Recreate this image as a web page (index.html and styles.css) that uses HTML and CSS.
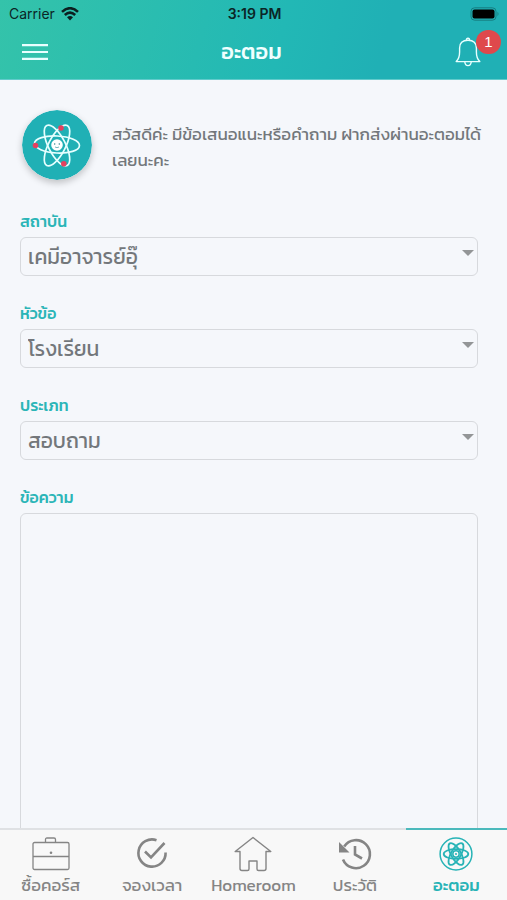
FILE: index.html
```html
<!DOCTYPE html>
<html lang="th">
<head>
<meta charset="utf-8">
<meta name="viewport" content="width=device-width, initial-scale=1">
<title>อะตอม</title>
<link rel="stylesheet" href="styles.css">
</head>
<body>
<div class="app">
  <header class="header">
    <div class="status">
      <div class="carrier">
        <span>Carrier</span>
        <svg width="18" height="14" viewBox="0 0 18 14" aria-hidden="true">
          <g fill="none" stroke="#0b1f20" stroke-width="2.6"><path d="M1 4.9Q9-2.4 17 4.9"/><path d="M3.8 8Q9 3.4 14.2 8"/></g>
          <path d="M6 10.3Q9 7.8 12 10.3L9 13.4Z" fill="#0b1f20"/>
        </svg>
      </div>
      <time class="clock">3:19 PM</time>
      <svg class="battery" width="31" height="14" viewBox="0 0 31 14" aria-hidden="true">
        <rect x="2" y=".8" width="25" height="12.4" rx="3.6" fill="none" stroke="#167d80"/>
        <rect x="3.500" y="2.6" width="22" height="8.8" rx="2" fill="#000"/>
        <path d="M28.5 4.8q2 2.2 0 4.4z" fill="#167d80"/>
      </svg>
    </div>
    <div class="titlebar">
      <button class="icon-button" type="button" aria-label="เมนู">
        <svg width="26" height="18" viewBox="0 0 26 18"><path d="M0 2.2h26M0 9h26M0 15.8h26" stroke="#e8ffff" stroke-width="2.2"/></svg>
      </button>
      <h1 class="title">อะตอม</h1>
      <button class="icon-button bell" type="button" aria-label="การแจ้งเตือน">
        <svg width="26" height="30" viewBox="0 0 26 30" fill="none" stroke="#e8ffff" stroke-width="1.4" stroke-linejoin="round">
          <path d="M1.2 24.6Q4.6 21.5 4.6 15v-4Q4.6 3.2 13 3.2T21.4 11v4q0 6.5 3.4 9.6Z"/>
          <path d="M11.4 3.2q0-2 1.6-2t1.6 2M9.800 25q.4 3.600 3.200 3.600t3.200-3.600"/>
        </svg>
        <span class="badge">1</span>
      </button>
    </div>
  </header>

  <main class="content">
    <section class="intro">
      <svg class="avatar" viewBox="0 0 70 70" aria-hidden="true">
        <circle cx="35" cy="35" r="35" fill="#20b0b5"/>
        <g fill="none" stroke="#e6ffff" stroke-width="1.700">
          <ellipse cx="35" cy="34.500" rx="22.500" ry="8.500" transform="rotate(3 35 34.500)"/>
          <ellipse cx="35" cy="35.500" rx="22.500" ry="8.500" transform="rotate(63 35 35.500)"/>
          <ellipse cx="35" cy="35.500" rx="22.500" ry="8.500" transform="rotate(117 35 35.500)"/>
        </g>
        <circle cx="35" cy="35" r="7" fill="#20b0b5"/>
        <circle cx="35" cy="35" r="5.800" fill="#fff"/>
        <path d="M33 37q2 1.400 4 0" fill="none" stroke="#59a5ac" stroke-width=".8"/>
        <circle cx="32.700" cy="34" r=".7" fill="#247b86"/><circle cx="37.300" cy="34" r=".7" fill="#247b86"/>
        <g fill="#e5405f"><circle cx="39" cy="18" r="2.800"/><circle cx="13.500" cy="35.500" r="2.800"/><circle cx="41.800" cy="53.800" r="2.800"/></g>
      </svg>
      <p class="greeting">สวัสดีค่ะ มีข้อเสนอแนะหรือคำถาม ฝากส่งผ่านอะตอมได้เลยนะคะ</p>
    </section>
    <form class="form">
      <div class="field">
        <label for="institute">สถาบัน</label>
        <div class="select-wrap"><select id="institute"><option>เคมีอาจารย์อุ๊</option></select></div>
      </div>
      <div class="field">
        <label for="topic">หัวข้อ</label>
        <div class="select-wrap"><select id="topic"><option>โรงเรียน</option></select></div>
      </div>
      <div class="field">
        <label for="kind">ประเภท</label>
        <div class="select-wrap"><select id="kind"><option>สอบถาม</option></select></div>
      </div>
      <div class="field">
        <label for="message">ข้อความ</label>
        <textarea id="message"></textarea>
      </div>
    </form>
  </main>

  <nav class="tabs">
    <a class="tab" href="#courses">
      <svg width="38" height="34" viewBox="0 0 38 34" fill="none" stroke="#858585" stroke-width="1.300">
        <rect x="1" y="5.500" width="36" height="27" rx="1.500"/><path d="M13.500 5.500v-3q0-1.500 1.500-1.500h7q1.500 0 1.500 1.500v3M1 19.500h36"/><circle cx="19" cy="15.800" r="1.300" fill="#858585" stroke="none"/>
      </svg>
      <span>ซื้อคอร์ส</span>
    </a>
    <a class="tab" href="#booking">
      <svg width="34" height="34" viewBox="0 0 34 34" fill="none" stroke="#858585" stroke-width="2.600">
        <path d="M21.500 3.200A13.600 13.600 0 1 0 30.600 15.500"/><path d="M10 14.500l6 6L29.500 6"/>
      </svg>
      <span>จองเวลา</span>
    </a>
    <a class="tab" href="#homeroom">
      <svg width="38" height="36" viewBox="0 0 38 36" fill="none" stroke="#858585" stroke-width="1.400" stroke-linejoin="round">
        <path d="M19 1.500L1.200 15.500h4.800V32.500q0 2 2 2h5.500q1.500 0 1.500-1.500V25h8v8q0 1.500 1.500 1.500H30q2 0 2-2V15.500h4.800Z"/>
      </svg>
      <span>Homeroom</span>
    </a>
    <a class="tab" href="#history">
      <svg width="34" height="34" viewBox="0 0 34 34" fill="none" stroke="#858585" stroke-width="2.600">
        <path d="M6.200 9.500A14 14 0 1 1 5 22.500"/><path d="M17 9v8.500l7 4"/><path d="M1 5v10.500h10.500Z" fill="#858585" stroke="none"/>
      </svg>
      <span>ประวัติ</span>
    </a>
    <a class="tab active" href="#atom" aria-current="page">
      <svg width="34" height="34" viewBox="0 0 34 34" fill="none" stroke="#27b3b6" stroke-width="1.800">
        <circle cx="17" cy="17" r="15.900" stroke-width="1.500"/>
        <ellipse cx="17" cy="17" rx="12.300" ry="4.900"/>
        <ellipse cx="17" cy="17" rx="12.300" ry="4.900" transform="rotate(60 17 17)"/>
        <ellipse cx="17" cy="17" rx="12.300" ry="4.900" transform="rotate(120 17 17)"/>
        <circle cx="17" cy="17" r="3.200" fill="#f8f8f8" stroke-width="1.500"/><circle cx="17" cy="17" r="1" fill="#27b3b6" stroke="none"/>
      </svg>
      <span>อะตอม</span>
    </a>
  </nav>
</div>
</body>
</html>
```
FILE: styles.css
```css
* {
  box-sizing: border-box;
}

body {
  margin: 0;
  background: #f5f7fb;
  color: #73777b;
  font-family: Kanit, Prompt, "Noto Sans Thai", "Noto Sans", sans-serif;
}

.app {
  display: flex;
  flex-direction: column;
  height: 100vh;
}

.header {
  flex: none;
  background: linear-gradient(105deg, #34c3aa 0%, #22b8b5 55%, #20b0b5 75%);
  border-bottom: 1px solid #62cbcc;
}

.status {
  display: grid;
  grid-template-columns: 1fr auto 1fr;
  align-items: center;
  height: 27px;
  padding: 0 7px 0 9px;
  color: #0b2526;
  font: 14px/20px Inter, sans-serif;
}

.carrier {
  display: flex;
  align-items: center;
  gap: 6px;
}

.clock {
  font-weight: 600;
}

.battery {
  justify-self: end;
}

.titlebar {
  display: grid;
  grid-template-columns: 1fr auto 1fr;
  align-items: center;
  height: 52px;
  padding: 0 26px 2px 22px;
}

.icon-button {
  position: relative;
  display: flex;
  padding: 0;
  border: 0;
  background: none;
}

.bell {
  justify-self: end;
}

.badge {
  position: absolute;
  top: -7px;
  left: 21px;
  width: 25px;
  height: 24px;
  border-radius: 12px;
  background: #df494c;
  color: #fff;
  font-size: 15px;
  font-weight: 500;
  line-height: 24px;
  text-align: center;
}

.title {
  margin: 0;
  color: #f0ffff;
  font-size: 22px;
  font-weight: 500;
  line-height: 28px;
}

.content {
  flex: 1;
  min-height: 0;
  overflow: hidden;
  padding: 30px 0 0 20px;
}

.intro {
  display: flex;
  align-items: flex-start;
  gap: 20px;
  padding: 0 10px 0 2px;
}

.avatar {
  flex: none;
  width: 70px;
  height: 70px;
  border-radius: 50%;
  box-shadow: 0 3px 7px #00000038;
}

.greeting {
  margin: 0;
  padding-top: 11px;
  font-size: 17px;
  line-height: 26px;
}

.form {
  padding: 29px 29px 0 0;
}

.field {
  display: flex;
  flex-direction: column;
  gap: 4px;
  margin-bottom: 25px;
}

label {
  color: #2bb5b7;
  font-size: 16px;
  font-weight: 500;
  line-height: 24px;
}

.select-wrap {
  position: relative;
  display: flex;
}

.select-wrap::after {
  content: "";
  position: absolute;
  top: 13px;
  right: 4px;
  border: 6px solid transparent;
  border-top-color: #939597;
  border-bottom: 0;
  pointer-events: none;
}

select,
textarea {
  width: 100%;
  border: 1px solid #d7d9dd;
  border-radius: 6px;
  background: transparent;
  color: inherit;
  font: inherit;
}

select {
  height: 39px;
  padding: 0 24px 0 7px;
  appearance: none;
  font-size: 21px;
  line-height: 36px;
}

textarea {
  height: 420px;
  padding: 7px;
  font-size: 21px;
  resize: none;
}

.tabs {
  display: grid;
  grid-template-columns: repeat(5, 1fr);
  flex: none;
  height: 72px;
  background: #f8f8f8;
}

.tab {
  display: flex;
  flex-direction: column;
  align-items: center;
  padding-top: 6px;
  border-top: 2px solid #dfe1e4;
  color: #858585;
  font-size: 17px;
  line-height: 26px;
  text-decoration: none;
}

.tab svg {
  height: 36px;
}

.active {
  border-color: #4bb9bc;
  color: #27b3b6;
  font-weight: 500;
}
```
